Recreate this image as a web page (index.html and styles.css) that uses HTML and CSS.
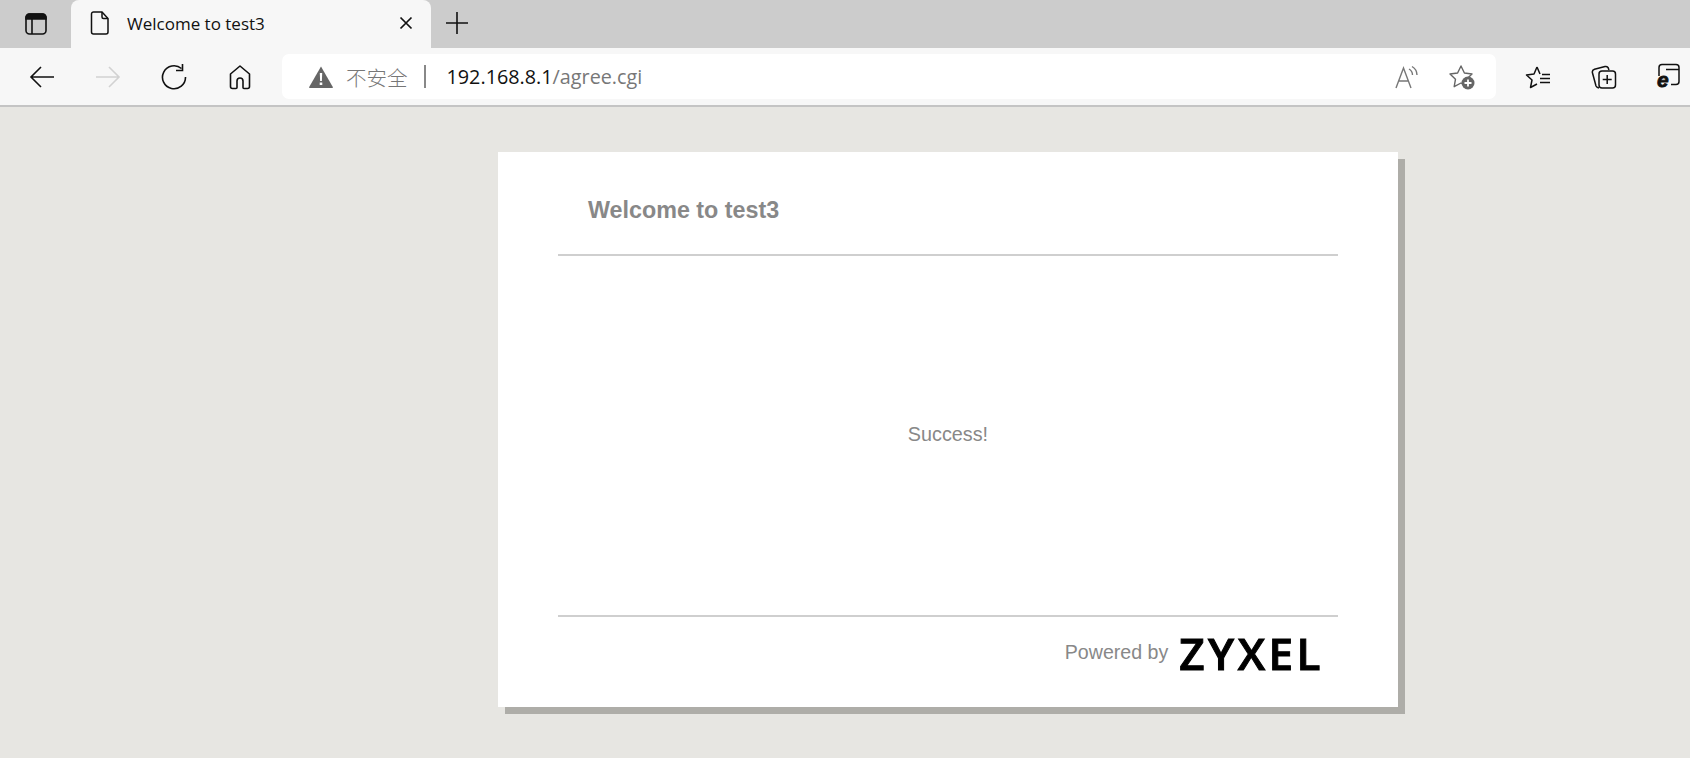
FILE: index.html
```html
<!DOCTYPE html>
<html lang="en">
<head>
    <meta charset="UTF-8">
    <meta name="viewport" content="width=device-width, initial-scale=1.0">
    <title>Welcome to test3</title>
    <link rel="stylesheet" href="styles.css">
</head>
<body>

    <div class="tab-strip">
        <div class="tab-side">
            <svg width="24" height="24" viewBox="0 0 24 24" fill="none" stroke="#111" stroke-width="1.6">
                <rect x="2" y="2" width="20" height="20" rx="3.5"/>
                <path d="M2 6.500V5.500A3.500 3.500 0 0 1 5.500 2h13A3.500 3.500 0 0 1 22 5.500V7H2z" fill="#111"/>
                <path d="M8 7v15"/>
            </svg>
        </div>
        <div class="tab">
            <svg class="tab-icon" width="20" height="24" viewBox="0 0 20 24" fill="none" stroke="#111" stroke-width="1.500">
                <path d="M3.500 1h8.500l6 6.500V21a2 2 0 0 1-2 2H3.500a2 2 0 0 1-2-2V3a2 2 0 0 1 2-2z"/>
                <path d="M12 1v5a1.500 1.500 0 0 0 1.500 1.500H18"/>
            </svg>
            <span class="tab-title">Welcome to test3</span>
            <svg width="14" height="14" viewBox="0 0 14 14" fill="none" stroke="#111" stroke-width="1.700">
                <path d="M1.500 1.500l11 11M12.500 1.500l-11 11"/>
            </svg>
        </div>
        <svg class="new-tab" width="22" height="22" viewBox="0 0 22 22" fill="none" stroke="#111" stroke-width="1.600">
            <path d="M11 0v22M0 11h22"/>
        </svg>
    </div>

    <div class="toolbar">
        <div class="tool-btn">
            <svg width="26" height="24" viewBox="0 0 26 24" fill="none" stroke="#111" stroke-width="1.600">
                <path d="M25 12H2M12 2L2 12l10 10"/>
            </svg>
        </div>
        <div class="tool-btn">
            <svg width="26" height="24" viewBox="0 0 26 24" fill="none" stroke="#d2d2d2" stroke-width="1.600">
                <path d="M1 12h23M14 2l10 10-10 10"/>
            </svg>
        </div>
        <div class="tool-btn">
            <svg width="26" height="26" viewBox="0 0 26 26" fill="none" stroke="#111" stroke-width="1.600">
                <path d="M20.500 4.500A11.500 11.500 0 1 0 24.500 13"/>
                <path d="M21.500 0v6.500H15"/>
            </svg>
        </div>
        <div class="tool-btn">
            <svg width="24" height="26" viewBox="0 0 24 26" fill="none" stroke="#111" stroke-width="1.600">
                <path d="M12 2L2.500 10v12.500a2 2 0 0 0 2 2h3.500a1 1 0 0 0 1-1V17a3 3 0 0 1 6 0v6.500a1 1 0 0 0 1 1h3.500a2 2 0 0 0 2-2V10z" stroke-linejoin="round"/>
            </svg>
        </div>

        <div class="address-bar">
            <svg class="warn-icon" width="24" height="22" viewBox="0 0 24 22">
                <path d="M12 0.500L23.800 21a.7.7 0 0 1-.6 1H.8a.7.7 0 0 1-.6-1z" fill="#666"/>
                <path d="M10.800 7h2.400l-.3 8h-1.800zM10.700 16.500h2.600v2.600h-2.600z" fill="#fff"/>
            </svg>
            <span class="not-secure">不安全</span>
            <span class="addr-divider"></span>
            <span class="url">192.168.8.1<span class="url-path">/agree.cgi</span></span>
            <div class="addr-actions">
                <svg width="24" height="24" viewBox="0 0 24 24" fill="none" stroke="#777" stroke-width="1.400">
                    <path d="M1 23L8.500 3l7.500 20M3.800 16h9.400"/>
                    <path d="M14 4a7 7 0 0 1 3.500 6M17 1.500a10 10 0 0 1 5 8.500"/>
                </svg>
                <svg width="28" height="26" viewBox="0 0 28 26">
                    <path d="M13 2l3.400 7 7.600 1-5.500 5.200 1.300 7.500L13 19l-6.800 3.700 1.300-7.500L2 10l7.600-1z" fill="none" stroke="#666" stroke-width="1.400" stroke-linejoin="round"/>
                    <circle cx="20" cy="19" r="6.500" fill="#666"/>
                    <path d="M20 15.500v7M16.500 19h7" stroke="#fff" stroke-width="1.800"/>
                </svg>
            </div>
        </div>

        <div class="tool-btn">
            <svg width="26" height="24" viewBox="0 0 26 24" fill="none" stroke="#111" stroke-width="1.500">
                <path d="M12 2L9 9l-7.500 1 5.500 5-1.500 7.500 6.500-3.500M12 2l3 7" stroke-linejoin="round"/>
                <path d="M17 9.500h8M15 13.500h10M15 17.500h10"/>
            </svg>
        </div>
        <div class="tool-btn">
            <svg width="26" height="26" viewBox="0 0 26 26" fill="none" stroke="#111" stroke-width="1.500">
                <path d="M8 24a4 4 0 0 1-3-2L1.500 9A3 3 0 0 1 3.500 5.300L14 2.500a3 3 0 0 1 3 1l1 2.500"/>
                <rect x="8" y="7" width="16.500" height="17" rx="3" fill="#f7f7f7"/>
                <path d="M16.200 11v9M11.700 15.500h9"/>
            </svg>
        </div>
        <div class="tool-btn">
            <svg class="ie-icon" width="26" height="28" viewBox="0 0 26 28" fill="none" stroke="#111" stroke-width="1.500">
                <path d="M4 13V4.500a3 3 0 0 1 3-3h14a3 3 0 0 1 3 3v14a3 3 0 0 1-3 3h-5"/>
                <path d="M11 6.500h13"/>
                <text class="ie-mark" x="2" y="24">e</text>
            </svg>
        </div>
    </div>

    <div class="page">
        <div class="card">
            <h2 class="card-title">Welcome to test3</h2>
            <div class="card-body">Success!</div>
            <div class="card-footer">
                <span class="powered">Powered by</span>
                <span class="logo">ZYXEL</span>
            </div>
        </div>
    </div>

</body>
</html>
```

FILE: styles.css
```css
body {
    margin: 0;
    height: 758px;
    overflow: hidden;
    display: flex;
    flex-direction: column;
    font-family: "Liberation Sans", Arial, sans-serif;
    background-color: #e7e6e2;
}
.tab-strip {
    height: 48px;
    display: flex;
    align-items: flex-end;
    background-color: #cccccc;
    flex: none;
}
.tab-side {
    width: 71px;
    height: 48px;
    display: flex;
    align-items: center;
    justify-content: center;
}
.tab {
    width: 360px;
    height: 48px;
    box-sizing: border-box;
    padding: 0 18px 2px 19px;
    display: flex;
    align-items: center;
    background-color: #f7f7f7;
    border-radius: 8px 8px 0 0;
}
.tab-icon {
    margin-right: 17px;
}
.tab-title {
    flex: 1;
    font-family: "Open Sans", sans-serif;
    font-size: 17px;
    color: #111;
}
.new-tab {
    margin: 0 0 14px 15px;
}
.toolbar {
    height: 59px;
    box-sizing: border-box;
    padding: 0 0 0 9px;
    display: flex;
    align-items: center;
    flex: none;
    background-color: #f7f7f7;
    border-bottom: 2px solid #c4c4c4;
}
.tool-btn {
    width: 66px;
    height: 46px;
    flex: none;
    display: flex;
    align-items: center;
    justify-content: center;
}
.tool-btn:last-child {
    width: 44px;
    justify-content: flex-end;
}
.address-bar {
    width: 1214px;
    height: 45px;
    flex: none;
    box-sizing: border-box;
    margin: 0 9px;
    padding: 0 20px 0 27px;
    display: flex;
    align-items: center;
    background-color: #fff;
    border-radius: 7px;
}
.warn-icon {
    margin-right: 13px;
}
.not-secure {
    font-family: "Noto Sans CJK SC", sans-serif;
    font-size: 20.500px;
    font-weight: 300;
    color: #777;
}
.addr-divider {
    width: 2px;
    height: 23px;
    margin: 0 21px 0 16px;
    background-color: #888;
}
.url {
    flex: 1;
    font-family: "Open Sans", sans-serif;
    font-size: 19.800px;
    color: #111;
}
.url-path {
    color: #777;
}
.addr-actions {
    display: flex;
    align-items: center;
    gap: 29px;
}
.ie-icon {
    overflow: visible;
}
.ie-mark {
    font-family: "Liberation Sans", sans-serif;
    font-size: 21px;
    font-weight: bold;
    font-style: italic;
    fill: #111;
    stroke: #111;
    stroke-width: 0.8;
}
.page {
    flex: 1;
    padding: 45px 0 0 498px;
}
.card {
    width: 900px;
    height: 555px;
    box-sizing: border-box;
    padding: 0 60px;
    display: flex;
    flex-direction: column;
    background-color: #fff;
    box-shadow: 7px 7px 0 #aeada8;
}
.card-title {
    height: 104px;
    margin: 0;
    box-sizing: border-box;
    padding: 45px 0 0 30px;
    font-size: 23.300px;
    color: #888;
    border-bottom: 2px solid #cfcfcf;
}
.card-body {
    flex: 1;
    display: flex;
    align-items: center;
    justify-content: center;
    padding-bottom: 2px;
    font-size: 19.800px;
    color: #888;
    border-bottom: 2px solid #cfcfcf;
}
.card-footer {
    height: 90px;
    flex: none;
    box-sizing: border-box;
    padding: 0 14px 18px 0;
    display: flex;
    align-items: center;
    justify-content: flex-end;
    gap: 11px;
}
.powered {
    margin-bottom: 2px;
    font-size: 19.600px;
    color: #888;
}
.logo {
    font-family: "Open Sans", sans-serif;
    font-size: 44px;
    font-weight: 600;
    letter-spacing: 3.500px;
    color: #000;
    line-height: 1;
    -webkit-text-stroke: 1px #000;
    filter: blur(0.5px);
}
```
